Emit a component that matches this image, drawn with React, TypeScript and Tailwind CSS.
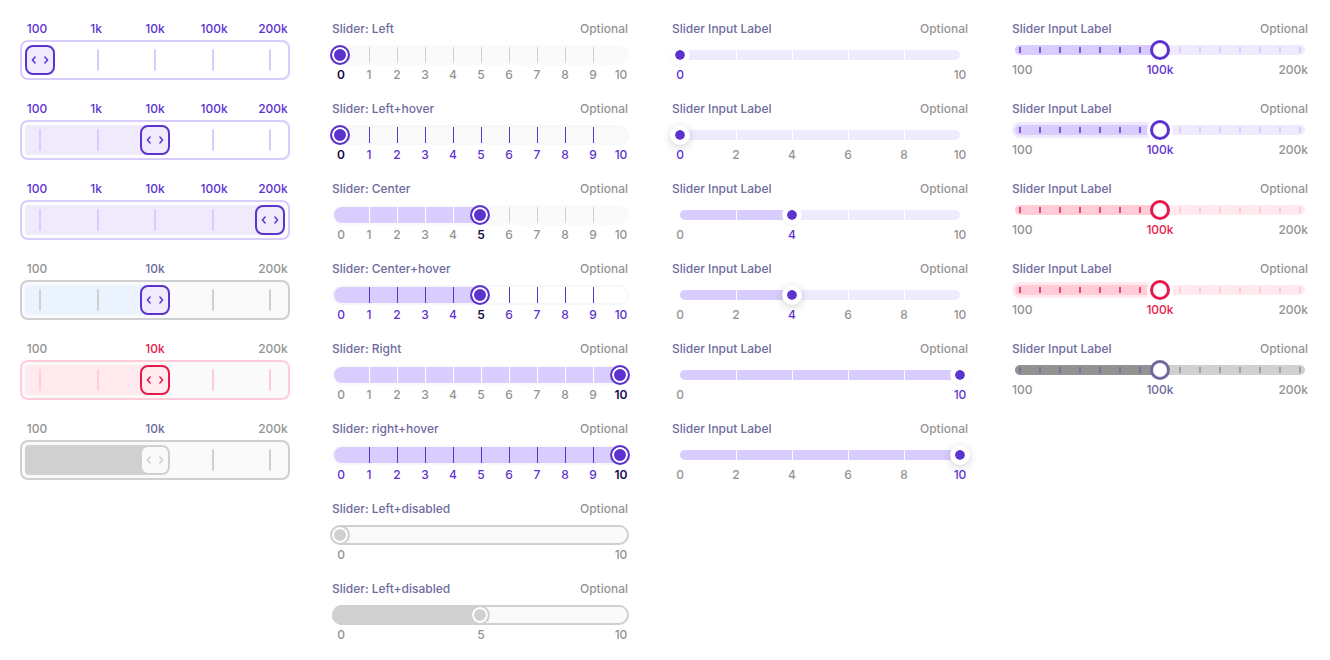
import { useId, useState } from 'react';
import type { ReactNode } from 'react';

const STACKED = 'col-start-1 row-start-1';

const RANGE =
  'col-start-1 row-start-1 m-0 w-full cursor-pointer appearance-none bg-transparent disabled:cursor-default [&::-webkit-slider-thumb]:box-border [&::-webkit-slider-thumb]:appearance-none';

/** Distance from the left end of a range input to the centre of its thumb. */
function thumbCentre(fraction: number, thumb: number, inset = 0): string {
  return `calc(${thumb / 2 - inset}px + ${fraction} * (100% - ${thumb}px))`;
}

/** Items centred on evenly spaced points, whatever their own width is. */
function Points({ count, className, children }: { count: number; className: string; children: (i: number) => ReactNode }) {
  return (
    <div className={`flex justify-between ${className}`}>
      {Array.from({ length: count }, (_, i) => (
        <span key={i} className="flex w-0 justify-center">
          {children(i)}
        </span>
      ))}
    </div>
  );
}

function Header({ id, label }: { id: string; label: string }) {
  return (
    <div className="flex justify-between px-0.5">
      <label htmlFor={id} className="text-[#6f6a9e]">
        {label}
      </label>
      <span className="text-[#939393]">Optional</span>
    </div>
  );
}

/* ---------- Boxed slider ---------- */

type BoxTone = 'active' | 'idle' | 'error' | 'disabled';

const BOX = {
  active: {
    frame: 'border-[#d9ccff] bg-white',
    fill: 'bg-[#f0ebfc]',
    tick: 'bg-[#d9ccff]',
    thumb: '[&::-webkit-slider-thumb]:border-[#5c33cf] [&::-webkit-slider-thumb]:bg-[#f0ebfc]',
    icon: 'text-[#5c33cf]',
    label: 'text-[#5c33cf]',
    current: 'text-[#5c33cf]',
  },
  idle: {
    frame: 'border-[#d0d0d0] bg-[#fafafa]',
    fill: 'bg-[#ebf3ff]',
    tick: 'bg-[#d0d0d0]',
    thumb: '[&::-webkit-slider-thumb]:border-[#5c33cf] [&::-webkit-slider-thumb]:bg-[#f0ebfc]',
    icon: 'text-[#5c33cf]',
    label: 'text-[#939393]',
    current: 'text-[#6f6a9e]',
  },
  error: {
    frame: 'border-[#ffccd8] bg-[#fafafa]',
    fill: 'bg-[#ffebef]',
    tick: 'bg-[#ffccd8]',
    thumb: '[&::-webkit-slider-thumb]:border-[#e6194d] [&::-webkit-slider-thumb]:bg-[#ffebef]',
    icon: 'text-[#e6194d]',
    label: 'text-[#939393]',
    current: 'text-[#e6194d]',
  },
  disabled: {
    frame: 'border-[#d0d0d0] bg-[#fafafa]',
    fill: 'bg-[#d0d0d0]',
    tick: 'bg-[#d0d0d0]',
    thumb: '[&::-webkit-slider-thumb]:border-[#d0d0d0] [&::-webkit-slider-thumb]:bg-[#fafafa]',
    icon: 'text-[#d0d0d0]',
    label: 'text-[#939393]',
    current: 'text-[#6f6a9e]',
  },
};

const STEPS = ['100', '1k', '10k', '100k', '200k'];

function BoxSlider({ start, tone }: { start: number; tone: BoxTone }) {
  const [value, setValue] = useState(start);
  const c = BOX[tone];
  const fraction = value / 4;
  return (
    <div>
      <Points count={5} className="mx-[17px]">
        {(i) => {
          const shown = tone === 'active' || i === 0 || i === 4 || i === value;
          return shown && <span className={i === value ? c.current : c.label}>{STEPS[i]}</span>;
        }}
      </Points>
      <div className={`mt-0.5 grid items-center rounded-lg border-2 p-[3px] ${c.frame}`}>
        {value > 0 && (
          <div className={`${STACKED} h-[30px] rounded-l ${c.fill}`} style={{ width: thumbCentre(fraction, 30) }} />
        )}
        <Points count={5} className={`${STACKED} mx-[15px]`}>
          {() => <span className={`h-[22px] w-0.5 shrink-0 rounded-full ${c.tick}`} />}
        </Points>
        <input
          type="range"
          aria-label="Amount"
          min={0}
          max={4}
          value={value}
          disabled={tone === 'disabled'}
          onChange={(e) => setValue(Number(e.target.value))}
          className={`${RANGE} h-[30px] [&::-webkit-slider-thumb]:size-[30px] [&::-webkit-slider-thumb]:rounded-lg [&::-webkit-slider-thumb]:border-2 [&::-webkit-slider-thumb]:border-solid ${c.thumb}`}
        />
        <svg
          viewBox="0 0 30 30"
          fill="none"
          stroke="currentColor"
          strokeWidth="1.5"
          strokeLinecap="round"
          strokeLinejoin="round"
          aria-hidden="true"
          className={`${STACKED} pointer-events-none size-[30px] ${c.icon}`}
          style={{ marginLeft: `calc(${fraction} * (100% - 30px))` }}
        >
          <path d="M10.1 12 7.4 15 10.1 18M19.9 12 22.6 15 19.9 18" />
        </svg>
      </div>
    </div>
  );
}

/* ---------- Ruled slider ---------- */

interface RuledProps {
  label: string;
  start: number;
  hover?: boolean;
  white?: boolean;
  disabled?: boolean;
}

function RuledSlider({ label, start, hover, white, disabled }: RuledProps) {
  const id = useId();
  const [value, setValue] = useState(start);
  const fraction = value / 10;
  const frame = disabled
    ? 'border-[#d0d0d0] bg-[#fafafa]'
    : white
      ? 'border-[#f7f7f7] bg-white'
      : hover
        ? 'border-[#f8f8f8] bg-[#fafafa]'
        : 'border-[#fafafa] bg-[#fafafa]';
  const thumb = disabled
    ? '[&::-webkit-slider-thumb]:border-[#d0d0d0] [&::-webkit-slider-thumb]:bg-[#d0d0d0]'
    : '[&::-webkit-slider-thumb]:border-[#5c33cf] [&::-webkit-slider-thumb]:bg-[#5c33cf]';

  const labelTone = (i: number) => {
    if (disabled) return 'text-[#939393]';
    if (i === value) return 'font-semibold text-[#140a4a]';
    return hover ? 'text-[#5c33cf]' : 'text-[#939393]';
  };
  const tickTone = (i: number) => {
    if (hover) return 'bg-[#5c33cf]';
    return i < value ? 'bg-white' : 'bg-[#d0d0d0]';
  };

  return (
    <div>
      <Header id={id} label={label} />
      <div className="mt-[7px] grid items-center">
        <div className={`${STACKED} mr-px ml-0.5 h-5 rounded-full border-2 ${frame}`} />
        {value > 0 && (
          <div
            className={`${STACKED} rounded-l-full ${disabled ? 'ml-0.5 h-5 bg-[#d0d0d0]' : 'ml-1 h-4 bg-[#d9ccff]'}`}
            style={{ width: thumbCentre(fraction, 20, disabled ? 2 : 4) }}
          />
        )}
        {!disabled && (
          <Points count={11} className={`${STACKED} mr-[9px] ml-[11px]`}>
            {(i) => i > 0 && i < 10 && <span className={`h-4 w-px shrink-0 ${tickTone(i)}`} />}
          </Points>
        )}
        <input
          id={id}
          type="range"
          min={0}
          max={10}
          value={value}
          disabled={disabled}
          onChange={(e) => setValue(Number(e.target.value))}
          className={`${RANGE} h-5 [&::-webkit-slider-thumb]:size-5 [&::-webkit-slider-thumb]:rounded-full [&::-webkit-slider-thumb]:border-2 [&::-webkit-slider-thumb]:border-solid [&::-webkit-slider-thumb]:shadow-[inset_0_0_0_2px_white] ${thumb}`}
        />
      </div>
      <Points count={11} className="mt-px mr-[9px] ml-[11px]">
        {(i) => (!disabled || i === 0 || i === 10 || i === value) && <span className={labelTone(i)}>{i}</span>}
      </Points>
    </div>
  );
}

/* ---------- Segmented slider ---------- */

function SegmentSlider({ start, hover }: { start: number; hover?: boolean }) {
  const id = useId();
  const [value, setValue] = useState(start);
  const thumb = hover
    ? '[&::-webkit-slider-thumb]:shadow-[0_2px_8px_rgba(0,0,0,0.18)]'
    : '[&::-webkit-slider-thumb]:shadow-[0_1px_3px_rgba(0,0,0,0.06)]';
  return (
    <div>
      <Header id={id} label="Slider Input Label" />
      <div className="mt-[7px] grid items-center">
        <div className={`${STACKED} mx-[10px] h-[10px] rounded-full bg-[#f0ebfc]`} />
        {value > 0 && (
          <div
            className={`${STACKED} ml-[10px] h-[10px] rounded-l-full bg-[#d9ccff]`}
            style={{ width: thumbCentre(value / 10, 20, 10) }}
          />
        )}
        <Points count={6} className={`${STACKED} mx-[10px]`}>
          {(i) => i > 0 && i < 5 && <span className="h-[10px] w-px shrink-0 bg-white" />}
        </Points>
        <input
          id={id}
          type="range"
          min={0}
          max={10}
          step={2}
          value={value}
          onChange={(e) => setValue(Number(e.target.value))}
          className={`${RANGE} h-5 [&::-webkit-slider-thumb]:size-5 [&::-webkit-slider-thumb]:rounded-full [&::-webkit-slider-thumb]:border-5 [&::-webkit-slider-thumb]:border-solid [&::-webkit-slider-thumb]:border-white [&::-webkit-slider-thumb]:bg-[#5c33cf] [&::-webkit-slider-thumb]:bg-clip-padding ${thumb}`}
        />
      </div>
      <Points count={6} className="mx-[10px] mt-px">
        {(i) =>
          (hover || i === 0 || i === 5 || i * 2 === value) && (
            <span className={i * 2 === value ? 'text-[#5c33cf]' : 'text-[#939393]'}>{i * 2}</span>
          )
        }
      </Points>
    </div>
  );
}

/* ---------- Notched slider ---------- */

type NotchTone = 'active' | 'error' | 'disabled';

const NOTCH = {
  active: {
    rest: 'bg-[#f0ebfc]',
    fill: 'bg-[#d9ccff]',
    halo: 'bg-[#f0ebfc]',
    before: 'bg-[#7c59d9]',
    after: 'bg-[#d9ccff]',
    thumb: '[&::-webkit-slider-thumb]:border-[#5c33cf]',
    text: 'text-[#5c33cf]',
  },
  error: {
    rest: 'bg-[#ffebef]',
    fill: 'bg-[#ffccd8]',
    halo: 'bg-[#ffebef]',
    before: 'bg-[#eb476f]',
    after: 'bg-[#ffccd8]',
    thumb: '[&::-webkit-slider-thumb]:border-[#e6194d]',
    text: 'text-[#e6194d]',
  },
  disabled: {
    rest: 'bg-[#d0d0d0]',
    fill: 'bg-[#939393]',
    halo: 'bg-[#d0d0d0]',
    before: 'bg-[#76729c]',
    after: 'bg-[#9f9f9f]',
    thumb: '[&::-webkit-slider-thumb]:border-[#6f6a9e]',
    text: 'text-[#6f6a9e]',
  },
};

function NotchSlider({ tone, hover }: { tone: NotchTone; hover?: boolean }) {
  const id = useId();
  const [value, setValue] = useState(7);
  const c = NOTCH[tone];
  const fraction = value / 14;
  return (
    <div>
      <Header id={id} label="Slider Input Label" />
      <div className="mt-0.5 grid items-center">
        <div className={`${STACKED} mx-[5px] h-[10px] rounded-full ${c.rest}`} />
        {hover && (
          <div
            className={`${STACKED} ml-0.5 h-4 rounded-l-full ${c.halo}`}
            style={{ width: thumbCentre(fraction, 20, 2) }}
          />
        )}
        <div
          className={`${STACKED} ml-[5px] h-[10px] rounded-l-full ${c.fill}`}
          style={{ width: thumbCentre(fraction, 20, 5) }}
        />
        <Points count={15} className={`${STACKED} mx-[10px]`}>
          {(i) => <span className={`h-1.5 w-0.5 shrink-0 ${i < value ? c.before : c.after}`} />}
        </Points>
        <input
          id={id}
          type="range"
          min={0}
          max={14}
          value={value}
          disabled={tone === 'disabled'}
          onChange={(e) => setValue(Number(e.target.value))}
          className={`${RANGE} h-5 [&::-webkit-slider-thumb]:size-5 [&::-webkit-slider-thumb]:rounded-full [&::-webkit-slider-thumb]:border-3 [&::-webkit-slider-thumb]:border-solid [&::-webkit-slider-thumb]:bg-white ${hover ? '[&::-webkit-slider-thumb]:shadow-[0_0_0_3px_white]' : ''} ${c.thumb}`}
        />
      </div>
      <div className="mt-px grid grid-cols-3 px-0.5 text-[#939393]">
        <span>100</span>
        <span className={`text-center ${c.text}`}>100k</span>
        <span className="text-right">200k</span>
      </div>
    </div>
  );
}

function Column({ children }: { children: ReactNode }) {
  return <section className="grid auto-rows-[80px] content-start">{children}</section>;
}

export default function App() {
  return (
    <main className="grid grid-cols-[27fr_30fr_30fr_30fr] gap-x-10 bg-white px-5 pt-5 font-['Inter',sans-serif] text-xs leading-[18px] font-medium">
      <Column>
        <BoxSlider start={0} tone="active" />
        <BoxSlider start={2} tone="active" />
        <BoxSlider start={4} tone="active" />
        <BoxSlider start={2} tone="idle" />
        <BoxSlider start={2} tone="error" />
        <BoxSlider start={2} tone="disabled" />
      </Column>
      <Column>
        <RuledSlider label="Slider: Left" start={0} />
        <RuledSlider label="Slider: Left+hover" start={0} hover />
        <RuledSlider label="Slider: Center" start={5} />
        <RuledSlider label="Slider: Center+hover" start={5} hover white />
        <RuledSlider label="Slider: Right" start={10} />
        <RuledSlider label="Slider: right+hover" start={10} hover />
        <RuledSlider label="Slider: Left+disabled" start={0} disabled />
        <RuledSlider label="Slider: Left+disabled" start={5} disabled />
      </Column>
      <Column>
        <SegmentSlider start={0} />
        <SegmentSlider start={0} hover />
        <SegmentSlider start={4} />
        <SegmentSlider start={4} hover />
        <SegmentSlider start={10} />
        <SegmentSlider start={10} hover />
      </Column>
      <Column>
        <NotchSlider tone="active" />
        <NotchSlider tone="active" hover />
        <NotchSlider tone="error" />
        <NotchSlider tone="error" hover />
        <NotchSlider tone="disabled" />
      </Column>
    </main>
  );
}
